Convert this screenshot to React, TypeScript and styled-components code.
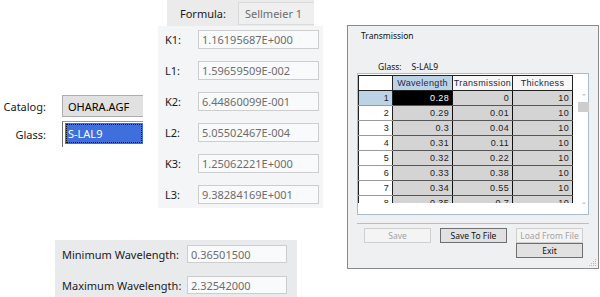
import React from 'react';
import styled, { createGlobalStyle } from 'styled-components';

const Global = createGlobalStyle`
  html, body { margin: 0; padding: 0; background: #ffffff; }
  body { font-family: "Noto Sans", "Liberation Sans", sans-serif; }
`;

const Canvas = styled.div`
  position: relative;
  width: 600px;
  height: 297px;
  overflow: hidden;
  background: #ffffff;
`;

/* Fragments placed on a free canvas, like windows on a desktop */
const Piece = styled.div<{ $x: number; $y: number; $w: number; $h: number }>`
  position: absolute;
  left: ${(p) => p.$x}px;
  top: ${(p) => p.$y}px;
  width: ${(p) => p.$w}px;
  height: ${(p) => p.$h}px;
  overflow: hidden;
  box-sizing: border-box;
`;

/* ---------- Catalog / Glass ---------- */
const CatalogGrid = styled.div`
  display: grid;
  grid-template-columns: 46px 81px;
  grid-template-rows: 22px 26px;
  column-gap: 16px;
  row-gap: 4px;
  padding-top: 2px;
  font-size: 11px;
  color: #1a1a1a;
`;

const RightLabel = styled.div`
  align-self: center;
  text-align: right;
  white-space: nowrap;
`;

const Combo = styled.div`
  display: flex;
  align-items: center;
  padding-left: 5px;
  background: #e1e1e1;
  border: 1px solid #adadad;
  border-right: none;
  color: #000;
  font-size: 11px;
`;

const GlassField = styled.div`
  display: flex;
  border-top: 1px solid #9a9a9a;
  border-left: 1px solid #6e6e6e;
  padding: 1px 0 0 2px;
  background: #fff;
`;

const Selection = styled.div`
  flex: 1;
  height: 21px;
  display: flex;
  align-items: center;
  padding-left: 3px;
  background: #3f6fdc;
  color: #fff;
  outline: 1px dotted #111;
  outline-offset: -2px;
  font-size: 11px;
`;

/* ---------- Formula panel ---------- */
const FormulaCol = styled.div`
  display: flex;
  flex-direction: column;
  height: 100%;
`;

const FormulaHeader = styled.div`
  margin-left: 9px;
  width: 147px;
  height: 26px;
  flex: none;
  display: flex;
  align-items: center;
  background: #ebebeb;
  padding-left: 13px;
  box-sizing: border-box;
  font-size: 11px;
  color: #1a1a1a;
  gap: 12px;
`;

const FormulaBox = styled.div`
  flex: 1;
  height: 21px;
  display: flex;
  align-items: center;
  padding-left: 6px;
  background: #efefef;
  border: 1px solid #dadada;
  border-right: none;
  color: #6d6d6d;
  font-size: 11px;
`;

const CoefBody = styled.div`
  flex: 1;
  background: #f4f5f6;
  display: flex;
  flex-direction: column;
  gap: 12px;
  padding-top: 4px;
`;

const FieldRow = styled.div<{ $label: number; $box: number; $pad: number }>`
  display: grid;
  grid-template-columns: ${(p) => p.$label}px ${(p) => p.$box}px;
  align-items: center;
  padding-left: ${(p) => p.$pad}px;
  font-size: 11px;
  color: #1a1a1a;
`;

const ValueBox = styled.div<{ $h: number }>`
  height: ${(p) => p.$h}px;
  box-sizing: border-box;
  display: flex;
  align-items: center;
  padding-left: 3px;
  background: #f9fafb;
  border: 1px solid #cdcdcd;
  color: #6d6d6d;
  font-size: 11px;
  white-space: nowrap;
`;

/* ---------- Wavelength panel ---------- */
const WavePanel = styled.div`
  height: 100%;
  background: #e9eaec;
  display: flex;
  flex-direction: column;
  gap: 13px;
  padding-top: 5px;
  box-sizing: border-box;
`;

/* ---------- Transmission dialog ---------- */
const Dialog = styled.div`
  height: 100%;
  box-sizing: border-box;
  border: 1px solid #8a8a8a;
  background: #eef0f2;
  display: flex;
  flex-direction: column;
  padding: 0 9px;
  font-size: 8.5px;
  color: #111;
  position: relative;
`;

const DialogTitle = styled.div`
  margin-top: 4px;
  padding-left: 4px;
  height: 12px;
  line-height: 12px;
`;

const GlassLine = styled.div`
  margin-top: 19px;
  padding-left: 21px;
  height: 12px;
  line-height: 12px;
  display: flex;
  gap: 10px;
`;

const TableBox = styled.div`
  height: 142px;
  box-sizing: border-box;
  background: #fff;
  border: 1px solid #a8bccb;
  display: flex;
  align-items: flex-start;
  gap: 5px;
  padding-top: 1px;
`;

const Viewport = styled.div`
  width: 215px;
  height: 128px;
  overflow: hidden;
  flex: none;
`;

const Grid = styled.table`
  border-collapse: collapse;
  table-layout: fixed;
  font-family: "Liberation Sans", Arial, sans-serif;
  font-size: 9px;
  letter-spacing: 0.35px;
  color: #1e1e1e;
`;

const Th = styled.th<{ $sel?: boolean }>`
  height: 14px;
  padding: 0;
  font-weight: normal;
  text-align: center;
  background: ${(p) => (p.$sel ? '#bcd3e6' : '#f7f7f7')};
  border: 1px solid #222;
  color: #2b2540;
`;

const Corner = styled.th`
  height: 14px;
  padding: 0;
  background: #fff;
  border: 1px solid #222;
`;

const RowHead = styled.td<{ $sel?: boolean }>`
  height: 14px;
  padding: 0 3px 0 0;
  text-align: right;
  background: ${(p) => (p.$sel ? '#bcd3e6' : '#ffffff')};
  border: 1px solid #9a9a9a;
  border-left: 1px solid #222;
  border-right: 1px solid #222;
`;

const Cell = styled.td<{ $sel?: boolean }>`
  height: 14px;
  padding: 0 3px 0 0;
  text-align: right;
  background: ${(p) => (p.$sel ? '#000' : '#d4d4d4')};
  color: ${(p) => (p.$sel ? '#fff' : '#1e1e1e')};
  border-top: 1px solid #555;
  border-bottom: 1px solid #555;
  border-left: 1px solid #111;
  border-right: 1px solid #111;
`;

const ScrollBar = styled.div`
  width: 11px;
  height: 132px;
  flex: none;
  display: flex;
  flex-direction: column;
  align-items: center;
  color: #9a9a9a;
  font-size: 7px;
`;

const ScrollArrow = styled.div`
  height: 11px;
  display: flex;
  align-items: center;
  justify-content: center;
`;

const ScrollTrack = styled.div`
  flex: 1;
  width: 100%;
  display: flex;
  flex-direction: column;
`;

const Spacer = styled.div<{ $h?: number }>`
  height: ${(p) => (p.$h ? `${p.$h}px` : 'auto')};
  flex: ${(p) => (p.$h ? 'none' : '1')};
`;

const Thumb = styled.div`
  width: 100%;
  height: 10px;
  background: #cdcdcd;
`;

const Separator = styled.div`
  margin-top: 8px;
  height: 1px;
  background: #a9c2d4;
`;

const Buttons = styled.div`
  margin-top: 4px;
  margin-left: 7px;
  display: grid;
  grid-template-columns: repeat(3, 67px);
  grid-template-rows: 15px 15px;
  column-gap: 9px;
`;

const Btn = styled.div<{ $disabled?: boolean; $col: number; $row: number }>`
  grid-column: ${(p) => p.$col};
  grid-row: ${(p) => p.$row};
  box-sizing: border-box;
  display: flex;
  align-items: center;
  justify-content: center;
  font-size: 8.5px;
  background: ${(p) => (p.$disabled ? '#f4f4f4' : '#e1e1e1')};
  border: 1px solid ${(p) => (p.$disabled ? '#cfcfcf' : '#6f6f6f')};
  color: ${(p) => (p.$disabled ? '#a3a3a3' : '#111')};
`;

const Grip = styled.svg`
  position: absolute;
  right: 1px;
  bottom: 1px;
`;

const rows: [string, string, string][] = [
  ['0.28', '0', '10'],
  ['0.29', '0.01', '10'],
  ['0.3', '0.04', '10'],
  ['0.31', '0.11', '10'],
  ['0.32', '0.22', '10'],
  ['0.33', '0.38', '10'],
  ['0.34', '0.55', '10'],
  ['0.35', '0.7', '10'],
];

const coefs: [string, string][] = [
  ['K1:', '1.16195687E+000'],
  ['L1:', '1.59659509E-002'],
  ['K2:', '6.44860099E-001'],
  ['L2:', '5.05502467E-004'],
  ['K3:', '1.25062221E+000'],
  ['L3:', '9.38284169E+001'],
];

export default function App() {
  return (
    <>
      <Global />
      <Canvas>
        <Piece $x={0} $y={93} $w={143} $h={56}>
          <CatalogGrid>
            <RightLabel>Catalog:</RightLabel>
            <Combo>OHARA.AGF</Combo>
            <RightLabel>Glass:</RightLabel>
            <GlassField>
              <Selection>S-LAL9</Selection>
            </GlassField>
          </CatalogGrid>
        </Piece>

        <Piece $x={158} $y={0} $w={165} $h={208}>
          <FormulaCol>
            <FormulaHeader>
              <span>Formula:</span>
              <FormulaBox>Sellmeier 1</FormulaBox>
            </FormulaHeader>
            <CoefBody>
              {coefs.map(([k, v]) => (
                <FieldRow key={k} $label={33} $box={121} $pad={7}>
                  <span>{k}</span>
                  <ValueBox $h={19}>{v}</ValueBox>
                </FieldRow>
              ))}
            </CoefBody>
          </FormulaCol>
        </Piece>

        <Piece $x={55} $y={240} $w={242} $h={57}>
          <WavePanel>
            <FieldRow $label={125} $box={100} $pad={7}>
              <span>Minimum Wavelength:</span>
              <ValueBox $h={18}>0.36501500</ValueBox>
            </FieldRow>
            <FieldRow $label={125} $box={100} $pad={7}>
              <span>Maximum Wavelength:</span>
              <ValueBox $h={18}>2.32542000</ValueBox>
            </FieldRow>
          </WavePanel>
        </Piece>

        <Piece $x={347} $y={25} $w={252} $h={244}>
          <Dialog>
            <DialogTitle>Transmission</DialogTitle>
            <GlassLine>
              <span>Glass:</span>
              <span>S-LAL9</span>
            </GlassLine>
            <TableBox>
              <Viewport>
                <Grid>
                  <colgroup>
                    <col style={{ width: 34 }} />
                    <col style={{ width: 60 }} />
                    <col style={{ width: 60 }} />
                    <col style={{ width: 60 }} />
                  </colgroup>
                  <thead>
                    <tr>
                      <Corner />
                      <Th $sel>Wavelength</Th>
                      <Th>Transmission</Th>
                      <Th>Thickness</Th>
                    </tr>
                  </thead>
                  <tbody>
                    {rows.map((r, i) => (
                      <tr key={i}>
                        <RowHead $sel={i === 0}>{i + 1}</RowHead>
                        <Cell $sel={i === 0}>{r[0]}</Cell>
                        <Cell>{r[1]}</Cell>
                        <Cell>{r[2]}</Cell>
                      </tr>
                    ))}
                  </tbody>
                </Grid>
              </Viewport>
              <ScrollBar>
                <ScrollTrack>
                  <Spacer $h={16} />
                  <ScrollArrow>&#8963;</ScrollArrow>
                  <Thumb />
                  <Spacer />
                  <ScrollArrow>&#8964;</ScrollArrow>
                </ScrollTrack>
              </ScrollBar>
            </TableBox>
            <Separator />
            <Buttons>
              <Btn $disabled $col={1} $row={1}>Save</Btn>
              <Btn $col={2} $row={1}>Save To File</Btn>
              <Btn $disabled $col={3} $row={1}>Load From File</Btn>
              <Btn $col={3} $row={2}>Exit</Btn>
            </Buttons>
            <Grip width="8" height="8" viewBox="0 0 8 8">
              {[
                [6, 0], [6, 2], [4, 2], [6, 4], [4, 4], [2, 4], [6, 6], [4, 6], [2, 6], [0, 6],
              ].map(([x, y], i) => (
                <rect key={i} x={x} y={y} width="1" height="1" fill="#b8b8b8" />
              ))}
            </Grip>
          </Dialog>
        </Piece>
      </Canvas>
    </>
  );
}
